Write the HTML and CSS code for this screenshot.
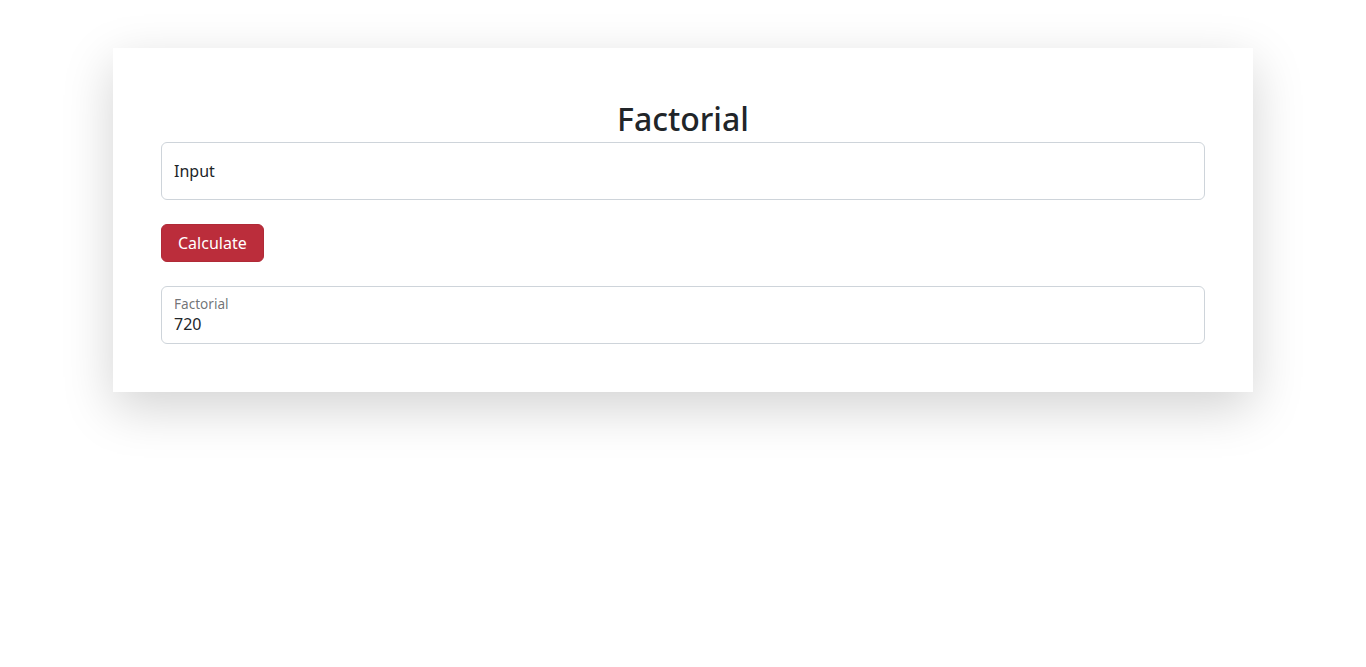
FILE: index.html
```html
<!DOCTYPE html>
<html lang="en">
<head>
<meta charset="utf-8">
<title>Factorial</title>
<link rel="stylesheet" href="styles.css">
</head>
<body>
<main class="page">
  <section class="card">
    <h2 class="title">Factorial</h2>
    <div class="field field-input">
      <span class="placeholder">Input</span>
    </div>
    <button class="btn" type="button">Calculate</button>
    <div class="field field-output">
      <span class="out-label">Factorial</span>
      <span class="out-value">720</span>
    </div>
  </section>
</main>
</body>
</html>
```

FILE: styles.css
```css
* { box-sizing: border-box; }
html, body {
  margin: 0;
  padding: 0;
  background: #fff;
}
body {
  font-family: "Noto Sans", "Open Sans", sans-serif;
  font-size: 16px;
  line-height: 1.5;
  color: #212529;
}
.page {
  min-height: 100vh;
  padding: 48px 113px 0;
}
.card {
  background: #fff;
  padding: 48px;
  box-shadow: 0 16px 48px rgba(0, 0, 0, 0.175);
  display: flex;
  flex-direction: column;
  align-items: stretch;
}
.title {
  margin: 4px 0 4px;
  font-size: 32px;
  line-height: 1.2;
  font-weight: 500;
  text-align: center;
}
.field {
  height: 58px;
  border: 1px solid #ced4da;
  border-radius: 6px;
  background: #fff;
}
.field-input {
  padding: 16px 12px;
  display: flex;
  align-items: center;
}
.placeholder {
  line-height: 24px;
  color: #212529;
}
.btn {
  align-self: flex-start;
  margin: 24px 0;
  padding: 6px 16px;
  font-family: inherit;
  font-size: 16px;
  line-height: 24px;
  color: #fff;
  background: #bb2d3b;
  border: 1px solid #b02a37;
  border-radius: 6px;
}
.field-output {
  padding: 9px 12px 7px;
  display: flex;
  flex-direction: column;
}
.out-label {
  font-size: 13.6px;
  line-height: 16px;
  color: rgba(33, 37, 41, 0.65);
}
.out-value {
  line-height: 24px;
}
```
